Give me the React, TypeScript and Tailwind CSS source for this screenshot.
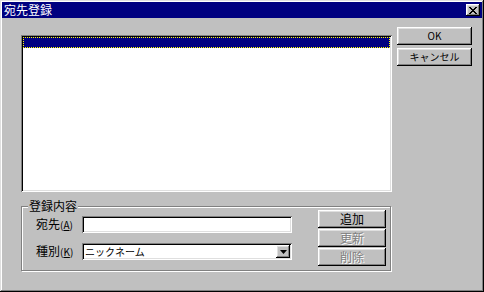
import React from "react";

const font = { fontFamily: '"Noto Sans CJK JP", "Noto Sans", sans-serif' };

const raised =
  "shadow-[inset_-1px_-1px_#000,inset_1px_1px_#fff,inset_-2px_-2px_#808080,inset_2px_2px_#dfdfdf]";
const sunken =
  "shadow-[inset_1px_1px_#808080,inset_-1px_-1px_#fff,inset_2px_2px_#000,inset_-2px_-2px_#dfdfdf]";

function Btn({ label, disabled, className = "" }: { label: string; disabled?: boolean; className?: string }) {
  return (
    <div
      className={`flex items-center justify-center bg-[#c0c0c0] leading-[12px] ${raised} ${
        disabled ? "text-[#808080] [text-shadow:1px_1px_0_#fff]" : "text-black"
      } ${className}`}
    >
      {label}
    </div>
  );
}

export default function App() {
  return (
    <div
      style={font}
      className="w-[484px] h-[292px] bg-[#c0c0c0] p-[2px] flex flex-col shadow-[inset_-1px_-1px_#000,inset_1px_1px_#dfdfdf,inset_-2px_-2px_#808080,inset_2px_2px_#fff]"
    >
      {/* title bar */}
      <div className="h-[16px] bg-[#000080] flex items-center justify-between pl-[2px] pr-[2px]">
        <span className="text-white text-[12px] leading-[12px]">宛先登録</span>
        <div className={`w-[14px] h-[12px] bg-[#c0c0c0] flex items-center justify-center ${raised}`}>
          <svg width="8" height="7" viewBox="0 0 8 7">
            <path d="M0 0h2v1h1v1h2V1h1V0h2v1H7v1H6v1H5v1h1v1h1v1h1v1H6V6H5V5H3v1H2v1H0V6h1V5h1V4h1V3H2V2H1V1H0z" fill="#000" />
          </svg>
        </div>
      </div>

      {/* body */}
      <div className="flex items-start">
        {/* left column */}
        <div className="ml-[19px] mt-[17px] w-[371px] flex flex-col">
          <div className={`h-[157px] bg-white p-[2px] ${sunken}`}>
            <div className="h-[11px] bg-[#000080] border border-dotted border-[#ffff00]" />
          </div>

          {/* group box */}
          <div className="relative mt-[14px] h-[65px] w-[370px] border border-[#808080] shadow-[inset_1px_1px_#fff,1px_1px_#fff]">
            <span className="absolute left-[6px] top-[-7px] px-[1px] bg-[#c0c0c0] text-[12px] leading-[12px] text-black">
              登録内容
            </span>
            <div className="flex pt-[3px]">
              <div className="flex flex-col mt-[6px] ml-[14px] gap-[10px]">
                <div className="flex items-center">
                  <span className="w-[46px] text-[12px] leading-[12px] text-black">
                    宛先<span className="text-[10px]">(<span className="underline">A</span>)</span>
                  </span>
                  <div className={`w-[210px] h-[17px] bg-white ${sunken}`} />
                </div>
                <div className="flex items-center">
                  <span className="w-[46px] text-[12px] leading-[12px] text-black">
                    種別<span className="text-[10px]">(<span className="underline">K</span>)</span>
                  </span>
                  <div className={`w-[210px] h-[17px] bg-white p-[2px] flex ${sunken}`}>
                    <span className="flex-1 pl-[1px] text-[10px] leading-[13px] text-black">ニックネーム</span>
                    <div className={`w-[14px] h-[13px] bg-[#c0c0c0] flex items-center justify-center ${raised}`}>
                      <svg width="7" height="4" viewBox="0 0 7 4">
                        <path d="M0 0h7L3.5 4z" fill="#000" />
                      </svg>
                    </div>
                  </div>
                </div>
              </div>
              <div className="ml-[26px] flex flex-col gap-[1px]">
                <Btn label="追加" className="w-[68px] h-[18px] text-[12px]" />
                <Btn label="更新" disabled className="w-[68px] h-[18px] text-[12px]" />
                <Btn label="削除" disabled className="w-[68px] h-[18px] text-[12px]" />
              </div>
            </div>
          </div>
        </div>

        {/* right column */}
        <div className="ml-[5px] mt-[9px] flex flex-col gap-[3px]">
          <Btn label="OK" className="w-[75px] h-[18px] text-[10px]" />
          <Btn label="キャンセル" className="w-[75px] h-[18px] text-[10px]" />
        </div>
      </div>
    </div>
  );
}
